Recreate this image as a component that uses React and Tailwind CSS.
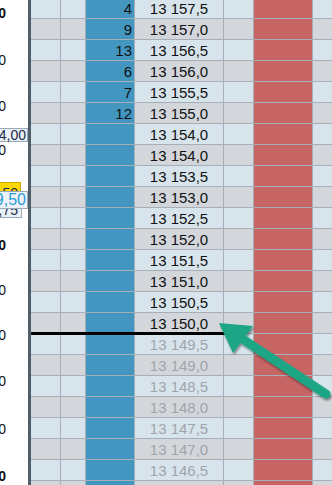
import React from "react";

const prices = [
  "13 157,5", "13 157,0", "13 156,5", "13 156,0", "13 155,5", "13 155,0",
  "13 154,0", "13 154,0", "13 153,5", "13 153,0", "13 152,5", "13 152,0",
  "13 151,5", "13 151,0", "13 150,5", "13 150,0", "13 149,5", "13 149,0",
  "13 148,5", "13 148,0", "13 147,5", "13 147,0", "13 146,5", "13 146,0",
];
const vols = ["4", "9", "13", "6", "7", "12"];

const axisLabels = [
  { y: 13, t: "13 160,0", b: true },
  { y: 60, t: "13 159,0" },
  { y: 106, t: "13 158,0" },
  { y: 150, t: "13 157,0" },
  { y: 245, t: "13 155,0", b: true },
  { y: 290, t: "13 154,0" },
  { y: 335, t: "13 153,0" },
  { y: 381, t: "13 152,0" },
  { y: 429, t: "13 151,0" },
  { y: 476, t: "13 150,0", b: true },
];

function Row({ i }) {
  const even = i % 2 === 0;
  const bg = even ? "bg-[#d8e4ec]" : "bg-[#d3d7db]";
  const priceColor = i <= 15 ? "text-[#111111]" : "text-[#a0a5aa]";
  return (
    <div className="flex h-[21px] shrink-0 border-b border-[#a6afb7]">
      <div className={`w-[30px] shrink-0 border-r border-[#a6afb7] ${bg}`} />
      <div className={`w-[25px] shrink-0 border-r border-[#a6afb7] ${bg}`} />
      <div className="w-[49px] shrink-0 border-r border-[#a6afb7] bg-[#4396bf] pr-[2px] text-right text-[15px] leading-[22px] text-[#111111]">
        {vols[i] || ""}
      </div>
      <div
        className={`w-[89px] shrink-0 border-r border-[#a6afb7] text-center text-[15px] leading-[22px] whitespace-nowrap ${bg} ${priceColor}`}
      >
        {prices[i]}
      </div>
      <div className={`w-[30px] shrink-0 border-r border-[#a6afb7] ${bg}`} />
      <div className="w-[59px] shrink-0 border-r border-[#a6afb7] bg-[#c76464]" />
      <div className={`flex-1 ${bg}`} />
    </div>
  );
}

export default function App() {
  return (
    <div className="relative h-[485px] w-[332px] overflow-hidden bg-white font-['Liberation_Sans',Arial,sans-serif]">
      <div className="flex h-full">
        <div className="relative w-[28px] shrink-0 bg-white">
          {axisLabels.map((l) => (
            <div
              key={l.y}
              style={{ top: l.y - 8 }}
              className={`absolute right-[22px] h-[16px] whitespace-nowrap text-[14px] leading-[16px] text-[#111111] ${
                l.b ? "font-bold" : ""
              }`}
            >
              {l.t}
            </div>
          ))}
          <div className="absolute right-0 top-[128px] flex h-[14px] w-[64px] items-center justify-end border border-[#9aa9b8] bg-[#eaf0f7] pr-[1px] text-[14px] leading-[12px] text-[#1b2a48] whitespace-nowrap">
            13 154,00
          </div>
          <div className="absolute right-[7px] top-[182px] flex h-[16px] w-[56px] items-start justify-end border border-[#c9a800] bg-[#ffd800] pr-[2px] pt-[3px] text-[14px] leading-[14px] text-[#1b2a48] whitespace-nowrap">
            13 153,50
          </div>
          <div className="absolute right-[6px] top-[203px] flex h-[15px] w-[56px] items-end justify-end border border-[#9aa9b8] bg-[#eaf0f7] pr-[3px] text-[14px] leading-[13px] text-[#1b2a48] whitespace-nowrap">
            13 152,75
          </div>
          <div className="absolute right-0 top-[191px] z-10 flex h-[18px] w-[66px] items-center justify-end border border-[#9aa9b8] bg-[#eef3f9] pr-[1px] text-[16px] leading-[16px] text-[#2a9dd8] whitespace-nowrap">
            13 149,50
          </div>
        </div>
        <div className="w-[3px] shrink-0 bg-[#4f5e6b]" />
        <div className="-mt-[2px] flex flex-1 flex-col">
          {prices.map((_, i) => (
            <Row key={i} i={i} />
          ))}
        </div>
      </div>
      <div className="absolute left-[31px] top-[332px] h-[3px] w-[204px] bg-black" />
      <svg
        className="pointer-events-none absolute left-0 top-0"
        width="332"
        height="485"
        viewBox="0 0 332 485"
      >
        <defs>
          <filter id="sh" x="-20%" y="-20%" width="140%" height="140%">
            <feDropShadow dx="1" dy="2" stdDeviation="1.2" floodColor="#000" floodOpacity="0.45" />
          </filter>
        </defs>
        <g filter="url(#sh)">
          <line x1="238" y1="336" x2="326" y2="394" stroke="#1ea686" strokeWidth="9" strokeLinecap="round" />
          <polygon points="219,323 253,326 233,353" fill="#1ea686" />
        </g>
      </svg>
    </div>
  );
}
